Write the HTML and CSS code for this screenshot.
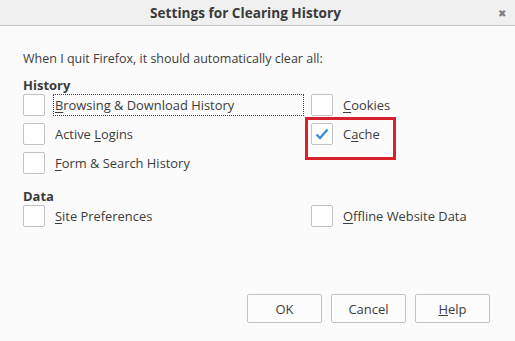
FILE: index.html
```html
<!DOCTYPE html>
<html>
<head>
  <meta charset='UTF-8'>
  <title>Settings for Clearing History</title>
  <link rel="stylesheet" href="styles.css">
</head>
<body>
  <div class='dialog'>
    <div class='titlebar'>
      <span class='title'>Settings for Clearing History</span>
      <span class='close'>&#x2716;</span>
    </div>

    <div class='content'>
      <p class='intro'>When I quit Firefox, it should automatically clear all:</p>

      <h2>History</h2>
      <div class='options'>
        <div class='option'><span class='box'></span><span class='label focused'><u>B</u>rowsing &amp; Download History</span></div>
        <div class='option'><span class='box'></span><span class='label'><u>C</u>ookies</span></div>
        <div class='option'><span class='box'></span><span class='label'>Active <u>L</u>ogins</span></div>
        <div class='option highlight'>
          <span class='box checked'>
            <svg width='14' height='12' viewBox='0 0 14 12'><path d='M1.5 6.5 L5 10 L12.5 1.5' fill='none' stroke='#3b8fd4' stroke-width='2.4'/></svg>
          </span>
          <span class='label'>C<u>a</u>che</span>
        </div>
        <div class='option'><span class='box'></span><span class='label'><u>F</u>orm &amp; Search History</span></div>
      </div>

      <h2 class='data'>Data</h2>
      <div class='options'>
        <div class='option'><span class='box'></span><span class='label'><u>S</u>ite Preferences</span></div>
        <div class='option'><span class='box'></span><span class='label'><u>O</u>ffline Website Data</span></div>
      </div>
    </div>

    <div class='buttons'>
      <button>OK</button>
      <button>Cancel</button>
      <button><u>H</u>elp</button>
    </div>
  </div>
</body>
</html>
```

FILE: styles.css
```css
* { margin: 0; padding: 0; box-sizing: border-box; }
body { font-family: "Open Sans", "Noto Sans", sans-serif; font-size: 12.5px; color: #3c3c3c; background: #fbfbfb; }
.dialog { width: 515px; height: 341px; display: flex; flex-direction: column; background: #fbfbfb; }
.titlebar { height: 26px; background: #f0f0f0; border-bottom: 1px solid #c8c8c8; display: flex; align-items: center; justify-content: center; padding-right: 24px; position: relative; }
.title { font-weight: bold; font-size: 13.6px; color: #3a3a3a; }
.close { position: absolute; right: 9px; top: 6px; font-size: 10px; color: #808080; }
.content { padding: 24px 23px 0; }
.intro { line-height: 18px; }
h2 { font-size: 13px; font-weight: bold; line-height: 17px; margin-top: 9px; color: #3a3a3a; }
h2.data { margin-top: 14px; }
.options { display: grid; grid-template-columns: 288px auto; row-gap: 7px; margin-top: 0; }
.option { display: flex; align-items: center; height: 22px; position: relative; }
.box { width: 22px; height: 22px; border: 1px solid #c2c2c2; border-radius: 2px; background: #fff; display: flex; align-items: center; justify-content: center; flex: none; }
.label { margin-left: 9px; line-height: 20px; padding: 0 1px; font-size: 12.9px; }
.label u { text-underline-offset: 2px; }
.focused { border: 1px dotted #444; width: 251px; line-height: 20px; margin-left: 8px; }
.highlight::after { content: ''; position: absolute; left: -6px; top: -6px; width: 85px; height: 37px; border: 3px solid #d7222c; }
.buttons { margin-top: auto; display: flex; justify-content: flex-end; gap: 9px; padding: 0 25px 18px 0; }
button { width: 75px; height: 29px; border: 1px solid #c3c3c3; border-radius: 2px; background: #fcfcfc; font-family: inherit; font-size: 13px; color: #3c3c3c; }
```
